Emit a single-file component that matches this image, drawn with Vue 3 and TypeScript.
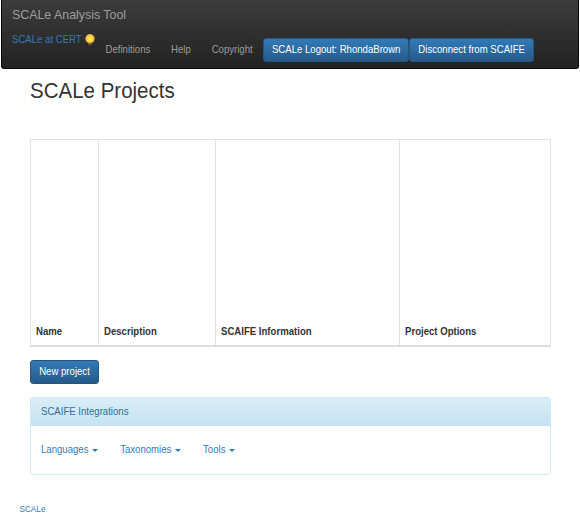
<script setup lang="ts">
const links: string[] = ['Definitions', 'Help', 'Copyright']
const columns: { label: string; cls: string }[] = [
  { label: 'Name', cls: 'c-name' },
  { label: 'Description', cls: 'c-desc' },
  { label: 'SCAIFE Information', cls: 'c-info' },
  { label: 'Project Options', cls: 'c-opts' },
]
const menus: string[] = ['Languages', 'Taxonomies', 'Tools']
</script>

<template>
  <div class="page">
    <header class="navbar">
      <div class="brand">SCALe Analysis Tool</div>
      <nav class="nav-row">
        <a class="cert"><span class="t">SCALe at CERT</span></a>
        <svg class="bulb" viewBox="0 0 10 12" width="10" height="12">
          <rect x="3" y="8" width="4" height="3.4" rx="1" fill="#5b4532" />
          <circle cx="5" cy="4.8" r="4.7" fill="#e9a93a" />
          <circle cx="5" cy="4.7" r="3.6" fill="#ffd04c" />
          <circle cx="5" cy="5" r="2" fill="#fff04f" />
        </svg>
        <a v-for="l in links" :key="l" class="nav-link"><span class="t">{{ l }}</span></a>
        <div class="actions">
          <button class="btn logout"><span class="t">SCALe Logout: RhondaBrown</span></button>
          <button class="btn disconnect"><span class="t">Disconnect from SCAIFE</span></button>
        </div>
      </nav>
    </header>

    <main class="container">
      <h2><span class="title">SCALe Projects</span></h2>
      <table class="projects">
        <thead>
          <tr>
            <th v-for="c in columns" :key="c.label" :class="c.cls"><span class="t">{{ c.label }}</span></th>
          </tr>
        </thead>
      </table>
      <button class="btn new"><span class="t">New project</span></button>
      <section class="panel">
        <div class="panel-heading"><span class="t">SCAIFE Integrations</span></div>
        <div class="panel-body">
          <a v-for="m in menus" :key="m" class="menu"><span class="t">{{ m }}</span><i class="caret"></i></a>
        </div>
      </section>
    </main>
    <footer><a class="t">SCALe</a></footer>
  </div>
</template>

<style>
body {
  background: #fff;
}
</style>

<style scoped>
.page {
  box-sizing: border-box;
  width: 580px;
  height: 529px;
  overflow: hidden;
  font-family: "Liberation Sans", Arial, sans-serif;
  font-size: 9.6px;
  line-height: 14px;
  color: #333;
}
.page * {
  box-sizing: border-box;
}
.t {
  display: inline-block;
  transform: scaleY(1.18);
  transform-origin: 50% 60%;
}
.title {
  display: inline-block;
  transform: scaleY(1.05);
}
.navbar {
  height: 69px;
  margin: 0 1px;
  padding: 7px 11px 0 10px;
  background: linear-gradient(#3c3c3c, #222);
  border: 1px solid #080808;
  border-top: 0;
  border-radius: 0 0 3px 3px;
  color: #9d9d9d;
}
.brand {
  height: 18px;
  font-size: 12.4px;
  line-height: 17px;
  transform: scaleY(1.06);
}
.nav-row {
  display: flex;
  align-items: flex-start;
  padding-top: 8px;
}
.cert {
  width: 73px;
  color: #337ab7;
  white-space: nowrap;
}
.bulb {
  margin: 1px 10.5px 0 0;
  flex: none;
}
.nav-link {
  margin: 10px 20.8px 0 0;
}
.actions {
  display: flex;
  margin: 5px 0 0 -10.3px;
}
.btn {
  height: 24px;
  padding: 0 0 1px;
  font: inherit;
  color: #fff;
  text-align: center;
  white-space: nowrap;
  background: linear-gradient(#337ab7, #265a88);
  border: 1px solid #245580;
  border-radius: 3px;
}
.logout {
  width: 146px;
}
.disconnect {
  width: 125px;
}
.container {
  width: 521px;
  margin-left: 30px;
}
h2 {
  height: 70px;
  margin: 0;
  padding-top: 10px;
  font-size: 20.5px;
  font-weight: 500;
  line-height: 24px;
}
.projects {
  width: 521px;
  height: 208px;
  table-layout: fixed;
  border-collapse: collapse;
  border: 1px solid #e2e2e2;
}
th {
  padding: 0 5px 6px;
  text-align: left;
  vertical-align: bottom;
  white-space: nowrap;
  border: 1px solid #e2e2e2;
  border-bottom: 2px solid #ddd;
}
.c-name {
  width: 68px;
}
.c-desc {
  width: 117px;
}
.c-info {
  width: 184px;
}
.new {
  display: block;
  width: 69px;
  margin-top: 13px;
}
.panel {
  height: 78px;
  margin-top: 13px;
  border: 1px solid #cdebf3;
  border-radius: 3px;
}
.panel-heading {
  height: 28px;
  padding: 7px 10px 0;
  color: #31708f;
  background: linear-gradient(#d9edf7, #c4e3f3);
  border-radius: 2px 2px 0 0;
}
.panel-body {
  display: flex;
  gap: 21.7px;
  padding: 17px 10px 0;
}
.menu {
  display: flex;
  align-items: center;
  color: #337ab7;
}
.caret {
  margin: 1px 0 0 4px;
  border-top: 3px solid #337ab7;
  border-left: 3px solid transparent;
  border-right: 3px solid transparent;
}
footer {
  padding: 28px 0 0 19.5px;
  font-size: 8.2px;
  color: #337ab7;
}
</style>
